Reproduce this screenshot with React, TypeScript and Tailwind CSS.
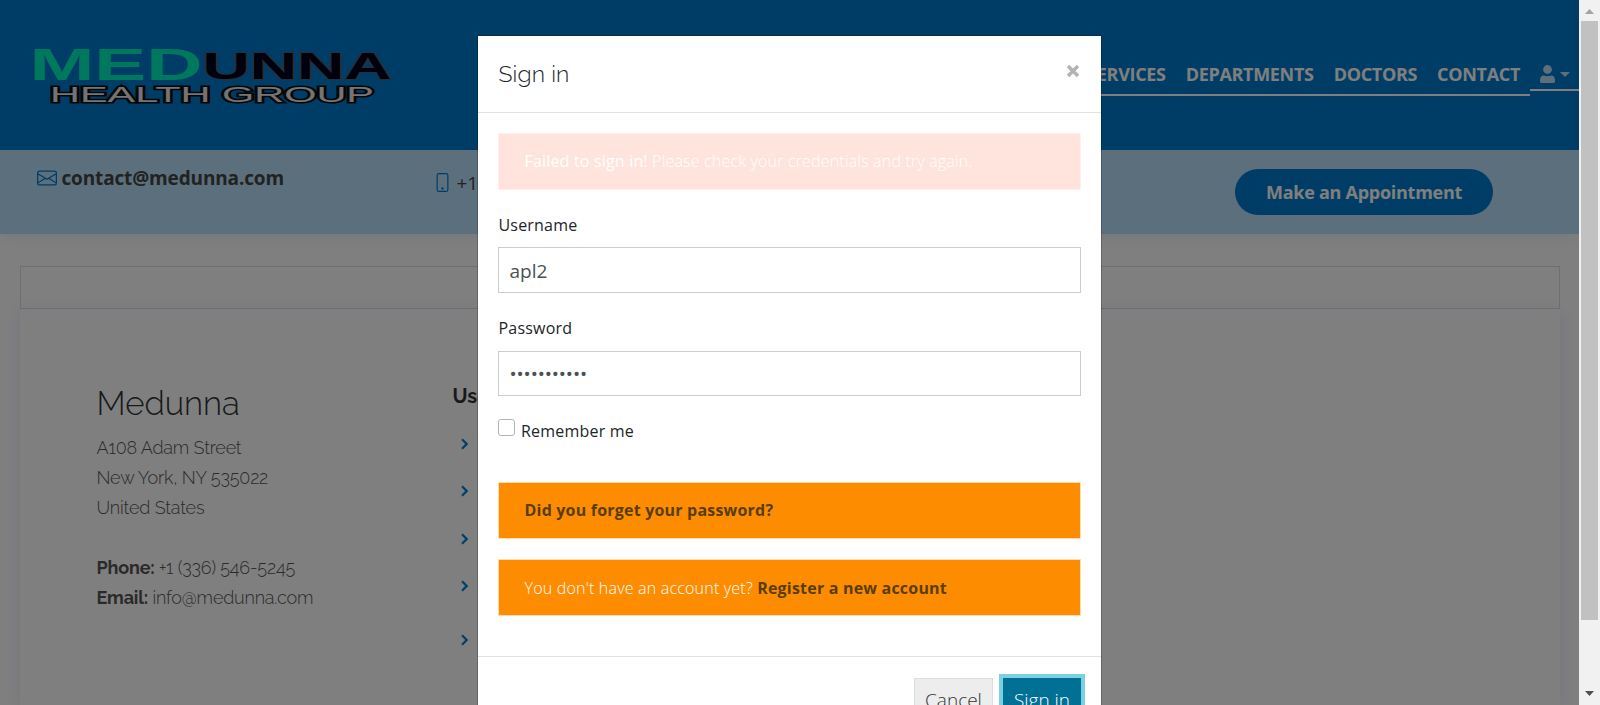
import { BsEnvelope, BsPhone } from "react-icons/bs";
import { BiChevronRight } from "react-icons/bi";

function Logo() {
  return (
    <svg width="400" height="150" viewBox="0 0 400 150" className="shrink-0" fontFamily="'Liberation Sans', Arial, sans-serif">
      <text x="29.5" y="79.800" fontSize="43.5" fontWeight="700" fill="#00f0bc" textLength="173" lengthAdjust="spacingAndGlyphs">MED</text>
      <text x="202.500" y="79" fontSize="36.5" fontWeight="700" fill="#00001c" stroke="#5a5a5a" strokeWidth="1.6" paintOrder="stroke" textLength="189" lengthAdjust="spacingAndGlyphs">UNNA</text>
      <text x="50" y="102" fontSize="22.5" fontWeight="400" fill="#e8e8e8" stroke="#0c0c0c" strokeWidth="3.2" paintOrder="stroke" textLength="324" lengthAdjust="spacingAndGlyphs">HEALTH GROUP</text>
    </svg>
  );
}

function Header() {
  return (
    <header className="flex h-[150px] items-start justify-between bg-[#007bcd]">
      <Logo />
      <nav className="flex items-start pt-[53px] text-[18px] font-bold leading-[43px] text-white">
        {["SERVICES", "DEPARTMENTS", "DOCTORS", "CONTACT"].map((t) => (
          <a key={t} className="h-[43px] border-b-2 border-white px-[10px] tracking-[-0.32px]">
            {t}
          </a>
        ))}
        <a className="flex h-[38px] w-[49px] items-center gap-[5px] border-b-2 border-white pl-[10px] pt-[5px]">
          <svg width="15" height="18" viewBox="0 0 15 18" fill="#b8def5">
            <circle cx="7.5" cy="4.5" r="4.4" />
            <path d="M0 15.5C0 12.4 1.4 10.6 4 10.6c1 .3 2 .6 3.500.6s2.500-.3 3.500-.6c2.600 0 4 1.800 4 4.900V16.500c0 .9-.6 1.500-1.500 1.500h-12C.6 18 0 17.400 0 16.500Z" />
          </svg>
          <svg width="10" height="5" viewBox="0 0 10 5" fill="#b8def5" className="mt-[1px]">
            <path d="M0 0h10L5 5Z" />
          </svg>
        </a>
      </nav>
    </header>
  );
}

function TopBar() {
  return (
    <div className="flex h-[84px] items-start bg-[#b8def8] text-[#444444] shadow-[0_2px_15px_rgba(25,119,204,0.12)]">
      <div className="flex w-[432.5px] items-center gap-[4px] pl-[37px] pt-[14px]">
        <BsEnvelope size={20} color="#007bcd" className="mb-[1px]" />
        <span className="pl-[0.5px] text-[19px] font-bold leading-[28px] tracking-[-0.15px]">contact@medunna.com</span>
      </div>
      <div className="flex items-center gap-[5px] pt-[16px]">
        <BsPhone size={19} color="#007bcd" className="mt-[-1px]" />
        <span className="text-[19px] leading-[34px]">+1</span>
      </div>
      <button className="ml-auto mr-[86px] mt-[19px] h-[46px] w-[258px] rounded-full bg-[#007bcd] text-[18px] font-bold tracking-[-0.27px] text-white">
        Make an Appointment
      </button>
    </div>
  );
}

function Footer() {
  const gaps = ["h-[47px]", "h-[48px]", "h-[47px]", "h-[54px]", "h-[47px]"];
  return (
    <footer className="ml-5 mr-[19px] flex h-[396px] bg-white shadow-[0_2px_15px_rgba(25,80,204,0.12)]">
      <div className="w-[432.5px] pl-[76.5px] pt-[76px] font-['Raleway','Lato',sans-serif] font-light text-[#555555]">
        <h3 className="text-[33px] leading-[38px] tracking-[-0.05px] text-[#333]">Medunna</h3>
        <p className="mt-[10px] text-[18px] leading-[30px] tracking-[-0.18px]">
          A108 Adam Street
          <br />
          New York, NY 535022
          <br />
          United States
          <br />
          <br />
          <strong className="font-bold">Phone:</strong> +1 (336) 546-5245
          <br />
          <strong className="font-bold">Email:</strong> info@medunna.com
        </p>
      </div>
      <div className="pt-[74px]">
        <h4 className="h-[50px] font-['Raleway','Lato',sans-serif] text-[20px] font-bold leading-[26px] text-[#333]">Useful Links</h4>
        <ul>
          {gaps.map((g, i) => (
            <li key={i} className={g}>
              <BiChevronRight size={22} color="#007bcd" stroke="#007bcd" strokeWidth={0.5} />
            </li>
          ))}
        </ul>
      </div>
    </footer>
  );
}

function Modal() {
  return (
    <div role="dialog" className="absolute left-[477px] top-[35px] w-[625px] border border-black/20 bg-clip-padding bg-white text-[#212529]">
      <div className="flex h-[77px] items-start justify-between border-b border-[#dee2e6] pl-[20.5px] pr-[20px]">
        <h5 className="mt-[21px] font-['Raleway','Lato',sans-serif] text-[23px] font-light leading-[34px] tracking-[0.15px]">Sign in</h5>
        <svg width="16" height="16" viewBox="0 0 16 16" className="mt-[27px]" stroke="#b3b3b3" strokeWidth="3.4">
          <path d="M3 3L13 13M13 3L3 13" />
        </svg>
      </div>
      <div className="flex flex-col px-[20px] pt-[20px] text-[16px] tracking-[0.2px]">
        <div className="h-[57px] border border-[#fff0ed] bg-[#ffe3dd] pl-[25.5px] font-light leading-[54px] tracking-[0.18px] text-white">
          <strong className="font-medium">Failed to sign in!</strong> Please check your credentials and try again.
        </div>
        <label className="mt-[23px] pl-[0.5px] leading-[24px]">Username</label>
        <div className="mt-[10px] h-[46px] border border-[#cccccc] pl-[10.5px] text-[19px] leading-[46px] tracking-normal text-[#495057]">apl2</div>
        <label className="mt-[23px] pl-[0.5px] leading-[24px]">Password</label>
        <div className="mt-[11px] h-[45px] border border-[#cccccc] pl-[10.5px] text-[19px] leading-[44px] tracking-[-0.1px] text-[#495057]">•••••••••••</div>
        <label className="mt-[22px] flex h-[26px] gap-[6px] leading-[27px]">
          <span className="mt-[1px] size-[17px] rounded-[3px] border border-[#adb5bd]" />
          Remember me
        </label>
        <div className="mt-[38px] h-[57px] border border-[#ffddb0] bg-[#fd8c00] pl-[25.5px] font-bold leading-[54px] text-[#593d00]">
          Did you forget your password?
        </div>
        <div className="mt-[20px] h-[57px] border border-[#ffddb0] bg-[#fd8c00] pl-[25.5px] font-light leading-[56px] text-white">
          You don't have an account yet? <strong className="font-bold text-[#593d00]">Register a new account</strong>
        </div>
      </div>
      <div className="mt-[40px] flex h-[90px] justify-end gap-[10px] border-t border-[#dee2e6] pr-[20px] pt-[21px] text-[19px] font-light">
        <button className="h-[46px] w-[79px] border border-[#dddddd] bg-[#ededed] pb-[2px] text-[#333]">Cancel</button>
        <button className="h-[46px] w-[78px] bg-[#007095] pb-[2px] text-white shadow-[0_0_0_4px_#7bd1e2]">Sign in</button>
      </div>
    </div>
  );
}

function Scrollbar() {
  return (
    <div className="flex w-[21px] flex-col items-center bg-[#f1f1f1]">
      <svg width="9" height="5" viewBox="0 0 9 5" className="mt-[9px]" fill="#a3a3a3">
        <path d="M0 5L4.500 0L9 5Z" />
      </svg>
      <div className="mt-[7px] h-[599px] w-[17px] bg-[#c1c1c1]" />
      <svg width="9" height="5" viewBox="0 0 9 5" className="mt-[71px]" fill="#505050">
        <path d="M0 0H9L4.500 5Z" />
      </svg>
    </div>
  );
}

export default function App() {
  return (
    <div className="flex h-[705px] w-[1600px] overflow-hidden font-['Open_Sans',sans-serif]">
      <div className="relative w-[1579px] overflow-hidden bg-white">
        <Header />
        <TopBar />
        <div className="ml-5 mr-[19px] mt-8 h-[43px] border border-[#dfdfdf]" />
        <Footer />
        <div className="absolute inset-0 bg-black/50" />
        <Modal />
      </div>
      <Scrollbar />
    </div>
  );
}
